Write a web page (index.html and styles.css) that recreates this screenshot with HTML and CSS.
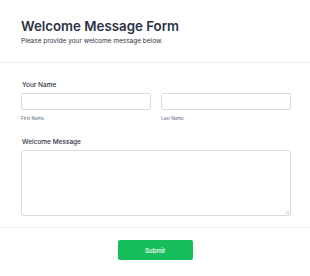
FILE: index.html
```html
<!DOCTYPE html>
<html lang="en">
<head>
    <meta charset="UTF-8">
    <meta name="viewport" content="width=device-width, initial-scale=1.0">
    <title>Welcome Message Form</title>
    <link rel="stylesheet" href="styles.css">
</head>
<body>
    <form class="form">
        <div class="form-header">
            <h1>Welcome Message Form</h1>
            <p>Please provide your welcome message below.</p>
        </div>

        <div class="form-body">
            <div class="form-group">
                <label class="label">Your Name</label>
                <div class="name-row">
                    <div class="name-field">
                        <input type="text" id="firstName">
                        <span class="sublabel">First Name</span>
                    </div>
                    <div class="name-field">
                        <input type="text" id="lastName">
                        <span class="sublabel">Last Name</span>
                    </div>
                </div>
            </div>

            <div class="form-group">
                <label class="label" for="message">Welcome Message</label>
                <textarea id="message"></textarea>
            </div>
        </div>

        <div class="form-footer">
            <button type="submit">Submit</button>
        </div>
    </form>
</body>
</html>
```

FILE: styles.css
```css
body {
    margin: 0;
    padding: 0;
    background-color: #fff;
    font-family: Inter, "Liberation Sans", sans-serif;
    color: #2c3345;
}

.form-header {
    padding: 18px 21px 0;
    height: 44px;
    border-bottom: 1px solid #ececf2;
}

.form-header h1 {
    margin: 0;
    font-size: 13.3px;
    font-weight: 600;
    line-height: 17px;
}

.form-header p {
    margin: 2px 0 0;
    font-size: 6.5px;
    line-height: 8px;
    color: #2c3345;
}

.form-body {
    padding: 18px 19px 0 21px;
    height: 146px;
    border-bottom: 1px solid #f1f1f5;
}

.label {
    display: block;
    font-size: 6.5px;
    font-weight: 500;
    line-height: 8px;
    margin: 0 0 4px 1px;
}

.form-group {
    margin-bottom: 16px;
}

.name-row {
    display: flex;
    gap: 10px;
}

.name-field {
    flex: 1;
}

input, textarea {
    display: block;
    box-sizing: border-box;
    width: 100%;
    border: 1px solid #d8dbe3;
    border-radius: 2px;
    background-color: #fff;
    font-family: inherit;
}

input {
    height: 17px;
}

textarea {
    height: 66px;
    resize: vertical;
}

/* small light resize grip like the original */
textarea::-webkit-resizer {
    background: linear-gradient(135deg, transparent 45%, #cfd2da 45%, #cfd2da 60%, transparent 60%, transparent 75%, #cfd2da 75%, #cfd2da 90%, transparent 90%) right 1px bottom 1px / 4px 4px no-repeat;
}

.sublabel {
    display: block;
    margin-top: 6px;
    font-size: 4.5px;
    line-height: 6px;
    color: #57647e;
}

.form-footer {
    display: flex;
    justify-content: center;
    padding-top: 12px;
}

button {
    width: 75px;
    height: 20px;
    border: none;
    border-radius: 2px;
    background-color: #18bd5b;
    color: #fff;
    font-family: inherit;
    font-size: 6px;
    font-weight: 500;
    cursor: pointer;
}
```
